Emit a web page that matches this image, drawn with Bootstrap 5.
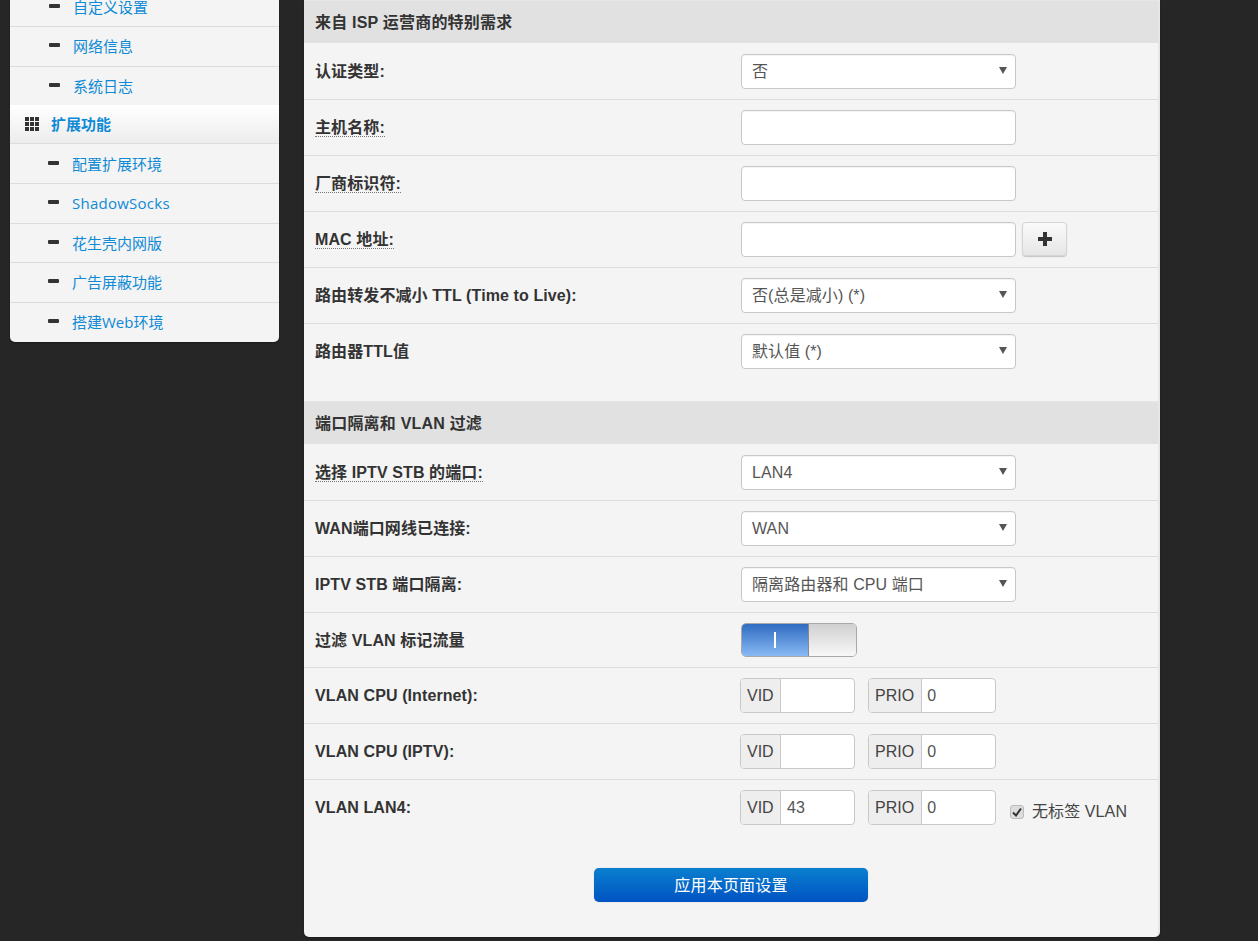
<!doctype html>
<html lang="zh"><head><meta charset="utf-8"><title>IPTV</title>
<link href="https://cdn.jsdelivr.net/npm/bootstrap@5.3.0/dist/css/bootstrap.min.css" rel="stylesheet">
<style>
html,body{height:941px;overflow:hidden}
body{background:#262626;font-family:"Liberation Sans","Noto Sans CJK SC",sans-serif;font-size:16px;color:#333;letter-spacing:.1px}
.shell{align-items:flex-start;padding-left:10px}
.side{width:269px;margin-top:-13px;background:#f4f4f4;border-radius:0 0 5px 5px;overflow:hidden;flex:none;box-shadow:0 1px 2px rgba(0,0,0,.3);letter-spacing:0}
.side a{color:#0f8ad6;text-decoration:none;font-family:"Open Sans","Noto Sans CJK SC",sans-serif;font-size:15px}
.sub{height:40px;border-top:1px solid #dcdcdc;padding-left:38px;display:flex;align-items:center;gap:13px}
.sub.short{height:39px}
.sub.upper{padding-left:39px}
.sub.top{border-top:0;padding-top:1px}
.dash{width:11px;height:4px;background:#333;border-radius:1px;margin-top:-3px;flex:none}
.group{height:39px;background:linear-gradient(#fff,#ececec);border-bottom:1px solid #ddd;padding-left:15px;display:flex;align-items:center;gap:12px;font-weight:700}
.group+.sub{border-top:0;padding-top:1px}
.group a{font-weight:700;font-size:15px}
.wide{letter-spacing:.25px}
.gridico{display:grid;grid-template-columns:repeat(3,4px);gap:1px;flex:none}
.gridico i{width:4px;height:4px;background:#333;display:block}
.panel-main{width:856px;height:937px;margin-left:25px;background:#f4f4f4;border-radius:0 0 5px 5px;border-right:2px solid #e6e6e6;flex:none;box-shadow:0 1px 2px rgba(0,0,0,.3)}
.sect{height:43px;background:#e1e1e1;padding:2px 0 0 11px;font-weight:700;font-size:16px;letter-spacing:.2px;display:flex;align-items:center;color:#333;border-top:1px solid #e6e6e6}
.frow{height:56px;border-top:1px solid #dcdcdc;display:flex;padding-top:10px}
.frow.nob{border-top:0;padding-top:11px}
.frow.sw{height:55px}
.frow.tall{height:78px}
.lbl{width:437px;padding-left:11px;font-weight:700;font-size:16px;line-height:22px;padding-top:7px;flex:none;color:#333;margin:0}
.lbl span.tip{border-bottom:1px dotted #777}
.fld{width:275px;height:35px;background:#fff;border:1px solid #c8c8c8;border-radius:4px;font-size:16px;color:#555;padding:1px 10px 0;display:flex;align-items:center;justify-content:space-between;box-shadow:inset 0 1px 1px rgba(0,0,0,.05);outline:0}
.arrow{width:0;height:0;border-left:4px solid transparent;border-right:4px solid transparent;border-top:7px solid #555;margin-right:-2px;margin-top:-3px}
.plusbtn{width:45px;height:34px;margin-left:6px;background:linear-gradient(#fafafa,#e6e6e6);border:1px solid #d4d4d4;border-radius:4px;box-shadow:0 1px 1px rgba(0,0,0,.2);padding:0;display:flex;align-items:center;justify-content:center}
.tog{width:116px;height:34px;border:1px solid #a8a8a8;border-radius:5px;display:flex;overflow:hidden}
.tog-on{width:67px;background:linear-gradient(#2f6bc0,#8abaf5);display:flex;align-items:center;justify-content:center;border-right:1px solid #889}
.tog-on i{display:block;width:2px;height:16px;background:#fff}
.tog-off{flex:1;background:linear-gradient(#d0d0d0,#f8f8f8)}
.grp{display:flex;height:35px;border:1px solid #c8c8c8;border-radius:4px;overflow:hidden;background:#fff;font-size:16px;color:#555;letter-spacing:0}
.grp b{font-weight:400;background:#eee;border-right:1px solid #c8c8c8;padding:0 6px;display:flex;align-items:center;color:#444}
.grp u{text-decoration:none;display:flex;align-items:center;padding-left:6px}
.g1{width:115px;margin-left:-1px}.g2{width:128px;margin-left:13px}
.g2 b{padding-right:7px}
.g2 u{padding-left:5px}
.g1 b{width:40px}
.chk{margin-left:14px;display:flex;align-items:center;gap:8px;font-size:16px;color:#444;padding-top:8px;height:35px}
.chkbox{width:14px;height:14px;background:#ddd;border:1px solid #bbb;border-radius:3px;display:flex;align-items:center;justify-content:center}
.actions{display:flex;justify-content:center;padding:33px 0 0}
.apply{width:274px;height:34px;background:linear-gradient(#0a7fcf,#0053c2);color:#fff;border:0;border-radius:5px;font-size:16px;letter-spacing:.2px;padding:1px 0 0;box-shadow:0 0 1px rgba(0,0,0,.3)}
</style></head><body>
<div class="d-flex shell">
<nav class="side">
<div class="sub short top upper"><span class="dash"></span><a href="#">自定义设置</a></div>
<div class="sub upper"><span class="dash"></span><a href="#">网络信息</a></div>
<div class="sub short upper"><span class="dash"></span><a href="#">系统日志</a></div>
<div class="group"><span class="gridico"><i></i><i></i><i></i><i></i><i></i><i></i><i></i><i></i><i></i></span><a href="#">扩展功能</a></div>
<div class="sub short"><span class="dash"></span><a href="#">配置扩展环境</a></div>
<div class="sub"><span class="dash"></span><a href="#" class="wide">ShadowSocks</a></div>
<div class="sub short"><span class="dash"></span><a href="#">花生壳内网版</a></div>
<div class="sub"><span class="dash"></span><a href="#">广告屏蔽功能</a></div>
<div class="sub"><span class="dash"></span><a href="#">搭建Web环境</a></div>
</nav>
<main class="panel-main">
<div class="sect">来自 ISP 运营商的特别需求</div>
<div class="frow nob"><p class="lbl">认证类型:</p><div class="fld">否<span class="arrow"></span></div></div>
<div class="frow"><p class="lbl"><span class="tip">主机名称:</span></p><input class="fld" aria-label="主机名称"></div>
<div class="frow"><p class="lbl"><span class="tip">厂商标识符:</span></p><input class="fld" aria-label="厂商标识符"></div>
<div class="frow"><p class="lbl"><span class="tip">MAC 地址:</span></p><input class="fld" aria-label="MAC"><button class="plusbtn" aria-label="add"><svg width="14" height="14" viewBox="0 0 14 14"><path d="M5 0h4v5h5v4H9v5H5V9H0V5h5z" fill="#333"/></svg></button></div>
<div class="frow"><p class="lbl">路由转发不减小 TTL (Time to Live):</p><div class="fld">否(总是减小) (*)<span class="arrow"></span></div></div>
<div class="frow tall"><p class="lbl">路由器TTL值</p><div class="fld">默认值 (*)<span class="arrow"></span></div></div>
<div class="sect">端口隔离和 VLAN 过滤</div>
<div class="frow nob"><p class="lbl"><span class="tip">选择 IPTV STB 的端口:</span></p><div class="fld">LAN4<span class="arrow"></span></div></div>
<div class="frow"><p class="lbl">WAN端口网线已连接:</p><div class="fld">WAN<span class="arrow"></span></div></div>
<div class="frow"><p class="lbl">IPTV STB 端口隔离:</p><div class="fld">隔离路由器和 CPU 端口<span class="arrow"></span></div></div>
<div class="frow sw"><p class="lbl">过滤 VLAN 标记流量</p><div class="tog"><span class="tog-on"><i></i></span><span class="tog-off"></span></div></div>
<div class="frow"><p class="lbl">VLAN CPU (Internet):</p><div class="grp g1"><b>VID</b><u></u></div><div class="grp g2"><b>PRIO</b><u>0</u></div></div>
<div class="frow"><p class="lbl">VLAN CPU (IPTV):</p><div class="grp g1"><b>VID</b><u></u></div><div class="grp g2"><b>PRIO</b><u>0</u></div></div>
<div class="frow"><p class="lbl">VLAN LAN4:</p><div class="grp g1"><b>VID</b><u>43</u></div><div class="grp g2"><b>PRIO</b><u>0</u></div><div class="chk"><span class="chkbox"><svg width="10" height="10" viewBox="0 0 10 10"><path d="M1 5.5l3 3 5-7" fill="none" stroke="#333" stroke-width="2"/></svg></span>无标签 VLAN</div></div>
<div class="actions"><button class="apply">应用本页面设置</button></div>
</main>
</div>
<script src="https://cdn.jsdelivr.net/npm/bootstrap@5.3.0/dist/js/bootstrap.bundle.min.js"></script>
</body></html>
